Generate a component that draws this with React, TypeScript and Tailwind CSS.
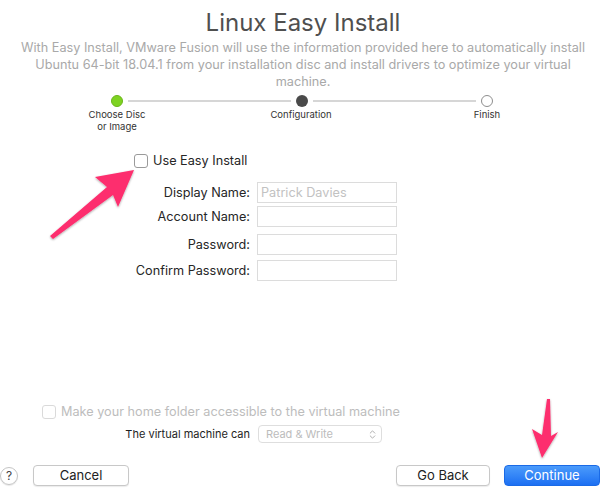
import { ChevronsUpDown } from 'lucide-react'

const font = { fontFamily: 'Inter, "Noto Sans", sans-serif' }

function Step({ state }: { state: 'done' | 'current' | 'todo' }) {
  if (state === 'done') {
    return <div className="w-[12px] h-[12px] rounded-full bg-[#7ed321] border border-[#6bb51a]" />
  }
  if (state === 'current') {
    return <div className="w-[12px] h-[12px] rounded-full bg-[#4a4a4a]" />
  }
  return <div className="w-[12px] h-[12px] rounded-full bg-white border border-[#8e8e8e]" />
}

function Field({ label, value, className }: { label: string; value?: string; className?: string }) {
  return (
    <div className={`flex items-center ${className ?? ''}`}>
      <div className="w-[250px] text-right text-[12.7px] text-[#262626]">{label}</div>
      <div className="ml-[7px] w-[140px] h-[21px] border border-[#dcdcdc] bg-white flex items-center px-[3px] text-[12.7px] text-[#c2c2c2]">
        {value}
      </div>
    </div>
  )
}

function Arrows() {
  return (
    <svg className="absolute inset-0 pointer-events-none" width="606" height="493" viewBox="0 0 606 493">
      <defs>
        <filter id="sh" x="-20%" y="-20%" width="140%" height="140%">
          <feDropShadow dx="0" dy="1" stdDeviation="1" floodColor="#000" floodOpacity="0.35" />
        </filter>
      </defs>
      <polygon
        points="134,170 95,177 107,187 50,236 53,239 113,195 118,207"
        fill="#fd2f6e"
        filter="url(#sh)"
      />
      <polygon
        points="547,399 550,399 551,436 558,432 542,458 532,429 542,435"
        fill="#fd2f6e"
        filter="url(#sh)"
      />
    </svg>
  )
}

export default function App() {
  return (
    <div className="relative w-[606px] h-[493px] bg-white overflow-hidden flex flex-col" style={font}>
      <h1 className="mt-[8px] h-[30px] text-center text-[24px] leading-[30px] text-[#4f4f4f]">
        Linux Easy Install
      </h1>
      <p className="mt-[1px] text-center text-[12.7px] leading-[17px] text-[#a9a9a9] whitespace-nowrap">
        With Easy Install, VMware Fusion will use the information provided here to automatically install
        <br />
        Ubuntu 64-bit 18.04.1 from your installation disc and install drivers to optimize your virtual
        <br />
        machine.
      </p>

      <div className="mt-[5px] ml-[111px] w-[382px] flex items-center">
        <Step state="done" />
        <div className="flex-1 mx-[5px] h-[2px] bg-[#d6d6d6]" />
        <Step state="current" />
        <div className="flex-1 mx-[5px] h-[2px] bg-[#d6d6d6]" />
        <Step state="todo" />
      </div>
      <div className="mt-[2px] flex text-[9.5px] leading-[12px] text-[#333] text-center">
        <div className="ml-[77px] w-[80px]">
          Choose Disc
          <br />
          or Image
        </div>
        <div className="ml-[104px] w-[80px]">Configuration</div>
        <div className="ml-[106px] w-[80px]">Finish</div>
      </div>

      <div className="mt-[21px] ml-[134px] flex items-center h-[14px]">
        <div className="w-[14px] h-[14px] rounded-[3px] border border-[#9a9a9a] bg-white" />
        <span className="ml-[5px] text-[12.7px] text-[#262626]">Use Easy Install</span>
      </div>

      <Field className="mt-[14px]" label="Display Name:" value="Patrick Davies" />
      <Field className="mt-[3px]" label="Account Name:" />
      <Field className="mt-[7px]" label="Password:" />
      <Field className="mt-[5px]" label="Confirm Password:" />

      <div className="mt-[124px] ml-[42px] flex items-center h-[14px]">
        <div className="w-[14px] h-[14px] rounded-[3px] border border-[#dadada] bg-white" />
        <span className="ml-[5px] text-[12.7px] text-[#bdbdbd]">
          Make your home folder accessible to the virtual machine
        </span>
      </div>

      <div className="mt-[6px] flex items-center h-[18px]">
        <div className="w-[250px] text-right text-[11px] text-[#1e1e1e]">The virtual machine can</div>
        <div className="ml-[8px] w-[124px] h-[18px] rounded-[4px] border border-[#dedede] flex items-center justify-between pl-[7px] pr-[3px] text-[11px] text-[#bcbcbc]">
          <span>Read &amp; Write</span>
          <ChevronsUpDown className="w-[11px] h-[11px] text-[#a8a8a8]" strokeWidth={2} />
        </div>
      </div>

      <div className="mt-[22px] flex items-center h-[21px]">
        <div className="w-[18px] h-[18px] rounded-full border border-[#c4c4c4] flex items-center justify-center text-[12px] text-[#444] shadow-[0_1px_1px_rgba(0,0,0,0.1)]">
          ?
        </div>
        <button className="ml-[15px] w-[96px] h-[21px] rounded-[4px] border border-[#c8c8c8] bg-white text-[13px] text-[#222] shadow-[0_1px_1px_rgba(0,0,0,0.08)]">
          Cancel
        </button>
        <button className="ml-auto w-[94px] h-[21px] rounded-[4px] border border-[#c8c8c8] bg-white text-[13px] text-[#222] shadow-[0_1px_1px_rgba(0,0,0,0.08)]">
          Go Back
        </button>
        <button className="ml-[14px] mr-[6px] w-[96px] h-[21px] rounded-[4px] bg-gradient-to-b from-[#4b9bfb] to-[#1c6ff2] text-[13px] text-white border border-[#1a6ae6]">
          Continue
        </button>
      </div>

      <Arrows />
    </div>
  )
}
